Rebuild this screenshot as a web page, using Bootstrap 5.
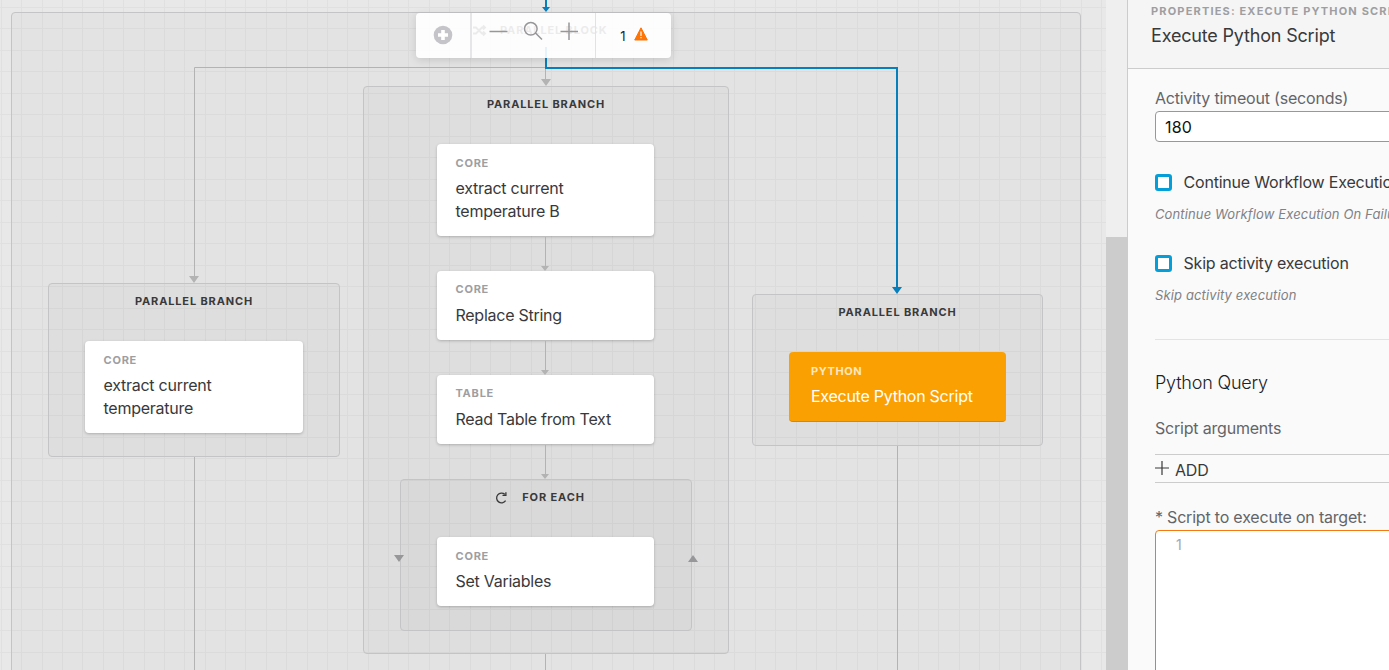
<!DOCTYPE html>
<html lang="en">
<head>
<meta charset="utf-8">
<title>Workflow editor</title>
<link href="https://cdn.jsdelivr.net/npm/bootstrap@5.3.0/dist/css/bootstrap.min.css" rel="stylesheet">
<style>
body{font-family:Inter,"Liberation Sans",sans-serif;font-size:16px;line-height:23px;color:#39393b;height:670px;background:#e8e8e8}
.canvas{width:1106px;height:670px;background:#e8e8e8}
.layer{left:0;top:0}
.zone{background:rgba(0,0,0,.018);border:1px solid #c4c4c6;border-radius:4px}
.zone-outer{left:11px;top:12px;width:1070px;height:700px}
.zone-a{left:48px;top:283px;width:292px;height:174px}
.zone-b{left:363px;top:86px;width:366px;height:568px}
.zone-c{left:752px;top:294px;width:291px;height:152px}
.zone-loop{width:292px;height:152px;background:rgba(0,0,0,.02)}
.zone-title{height:57px;padding-top:9px;line-height:16px;font-size:11px;font-weight:700;letter-spacing:.86px}
.node{width:217px;background:#fff;border-radius:4px;padding:11px 18px 13px 18.5px;box-shadow:0 1px 3px rgba(0,0,0,.22);letter-spacing:-.26px}
.zone-a .node{width:218px}
.zone-b .node{margin-right:1px}
.kind{font-size:11px;font-weight:700;line-height:16px;letter-spacing:.76px;color:#9e9ea2;margin-bottom:6px}
.kind-up{margin-top:-1px;margin-bottom:7px}
.node-active{background:#fba003;color:#fff;padding-left:22px;border-bottom:1px solid #d98500;height:70px;box-shadow:none}
.node-active .kind{color:#ffe7bd;letter-spacing:.6px}
.tools{left:416px;top:13px;width:255px;height:45px;background:rgba(255,255,255,.9);border-radius:4px;box-shadow:0 2px 8px rgba(0,0,0,.13)}
.tool-add{width:56px;border-right:2px solid #e6e6e8}
.tool-zoom{width:124px;border-right:1px solid #e2e2e4}
.block-title{left:500px;top:22px;line-height:16px;font-size:11px;font-weight:700;letter-spacing:.86px}
.track{width:22px;background:#efefef;border-right:1px solid #ccc}
.thumb{margin-top:237px;background:#ccc}
.panel{width:261px;background:#fafafa}
.panel-head{height:69px;background:#f5f5f5;border-bottom:1px solid #ccc;padding:3px 0 0 23px}
.crumb{font-size:11px;font-weight:700;line-height:16px;letter-spacing:1.17px;color:#9e9ea2}
.panel-name{font-size:18px;line-height:24px;margin-top:5px;letter-spacing:-.18px}
.fields{padding-left:27px;letter-spacing:-.2px}
.fields .lbl{color:#636569}
.box-input{height:31px;width:300px;border:1px solid #98989c;border-radius:4px;background:#fff;padding:4px 9px;color:#111;letter-spacing:.2px}
.tick{width:17px;height:17px;flex:none;border:3px solid #049fd9;border-radius:3px;background:#fff}
.tip{font-size:13px;line-height:18px;font-style:italic;color:#7f8186;letter-spacing:.13px;margin:11px 0 29px}
.add-row{height:29px;border-top:1px solid #ccc;border-bottom:1px solid #ccc}
.editor{width:300px;height:160px;border:1px solid #f47a10;border-radius:4px;background:#fff;padding:2px 0 0 20px;font-size:14px;color:#a5a7ab}
</style>
</head>
<body class="d-flex overflow-hidden">
<main class="canvas position-relative overflow-hidden flex-shrink-0">
  <svg class="layer position-absolute" width="1106" height="670">
    <defs><pattern id="mesh" x="1" y="7" width="163" height="43" patternUnits="userSpaceOnUse">
      <path d="M.5 0V43M20.500 0V43M41.500 0V43M61.500 0V43M81.500 0V43M102.500 0V43M122.500 0V43M143.500 0V43M0 .5H163M0 21.500H163" stroke="#e0e0e0"/></pattern></defs>
    <rect width="1106" height="670" fill="url(#mesh)"/>
  </svg>
  <div class="zone zone-outer position-absolute"></div>
  <section class="zone zone-a position-absolute d-flex flex-column align-items-center">
    <div class="zone-title">PARALLEL BRANCH</div>
    <div class="node"><div class="kind">CORE</div>extract current<br>temperature</div>
  </section>
  <section class="zone zone-b position-absolute d-flex flex-column align-items-center">
    <div class="zone-title">PARALLEL BRANCH</div>
    <div class="d-flex flex-column align-items-center" style="gap:35px">
      <div class="node"><div class="kind">CORE</div>extract current<br>temperature B</div>
      <div class="node"><div class="kind kind-up">CORE</div>Replace String</div>
      <div class="node"><div class="kind kind-up">TABLE</div>Read Table from Text</div>
      <div class="zone zone-loop d-flex flex-column align-items-center">
        <div class="zone-title d-flex"><svg width="13" height="14" viewBox="0 0 13 14" style="margin:2px 14px 0 -12px" fill="none" stroke="#39393b" stroke-width="1.300"><path d="M10.600 9.700A4.900 4.900 0 1 1 9.800 3.300M7.500 4.300H10.900V1.200"/></svg>FOR EACH</div>
        <div class="node"><div class="kind">CORE</div>Set Variables</div>
      </div>
    </div>
  </section>
  <section class="zone zone-c position-absolute d-flex flex-column align-items-center">
    <div class="zone-title">PARALLEL BRANCH</div>
    <div class="node node-active"><div class="kind">PYTHON</div>Execute Python Script</div>
  </section>
  <svg class="layer position-absolute" width="1106" height="670" fill="none">
    <path d="M545.500 67.500H194.500V277M545.500 68V80M545.500 237V266M545.500 341V370M545.500 445V474M194.500 457V670M545.500 654V670M897.500 446V670" stroke="#b3b3b3"/>
    <path d="M189 276H199L194 283ZM541 79H551L546 86ZM541 266H549L545 271ZM541 370H549L545 375ZM541 474H549L545 479Z" fill="#b3b3b3"/>
    <path d="M394 555H404L399 562ZM688 562H698L693 555Z" fill="#97979a"/>
    <path d="M546 0V8M546 47V68H897V288" stroke="#087fbd" stroke-width="2"/>
    <path d="M542 7H550L546 12ZM892 287H902L897 294Z" fill="#087fbd"/>
    <path d="M473 27.500H476L482 33.500H485M473 33.500H476L482 27.500H485M483 25.500L485 27.500 483 29.500M483 31.500L485 33.500 483 35.500" stroke="#39393b" stroke-width="1.800"/>
  </svg>
  <div class="block-title position-absolute">PARALLEL BLOCK</div>
  <div class="tools position-absolute d-flex">
    <div class="tool-add d-flex align-items-center justify-content-center"><svg width="20" height="20" viewBox="0 0 20 20" style="margin-top:-1px"><circle cx="10" cy="10" r="9.300" fill="#c4c4c9"/><path d="M10 5V15M5 10H15" stroke="#fff" stroke-width="3.600"/></svg></div>
    <div class="tool-zoom"><svg width="123" height="45" fill="none" stroke="#97979a" stroke-width="1.500"><path d="M17.500 18.500H35.500M88.500 18.500H106M97 9.500V27M63.500 20L70 26.500"/><circle cx="58.800" cy="15.800" r="6.300"/></svg></div>
    <div class="d-flex align-items-center justify-content-center flex-fill gap-2" style="font-size:13px;color:#222;padding-left:1px"><span style="padding-top:2px">1</span><svg width="14" height="14" viewBox="0 0 14 14" style="margin-top:-3px"><path d="M7 .8 13.300 13H.7Z" fill="#fd7407" stroke="#fd7407" stroke-linejoin="round"/><path d="M7 4.500V9M7 10V11.300" stroke="#fff" stroke-width="1.200"/></svg></div>
  </div>
</main>
<div class="track d-flex flex-column flex-shrink-0"><div class="thumb flex-fill"></div></div>
<aside class="panel flex-shrink-0 overflow-hidden text-nowrap">
  <header class="panel-head"><div class="crumb">PROPERTIES: EXECUTE PYTHON SCRIPT</div><div class="panel-name">Execute Python Script</div></header>
  <div class="fields">
    <div class="lbl" style="padding-top:18px">Activity timeout (seconds)</div>
    <div class="box-input" style="margin-top:1px">180</div>
    <div class="d-flex align-items-center" style="margin-top:29px"><span class="tick"></span><span style="margin-left:11.5px">Continue Workflow Execution On Failure</span></div>
    <div class="tip">Continue Workflow Execution On Failure</div>
    <div class="d-flex align-items-center"><span class="tick"></span><span style="margin-left:11.5px">Skip activity execution</span></div>
    <div class="tip mb-0">Skip activity execution</div>
    <div style="margin-top:35px;border-top:1px solid #e3e3e5"></div>
    <div style="margin-top:31px;font-size:18px;font-weight:300;line-height:24px;color:#222">Python Query</div>
    <div class="lbl" style="margin-top:22px">Script arguments</div>
    <div class="add-row d-flex align-items-center" style="margin-top:14px"><svg width="14" height="14" class="me-2" style="margin-top:-1px" stroke="#39393b" stroke-width="1.200"><path d="M0 7H14M7 0V14"/></svg><span style="margin-left:-2px;padding-top:3px">ADD</span></div>
    <div class="lbl" style="margin-top:23px">* Script to execute on target:</div>
    <div class="editor" style="margin-top:1px">1</div>
  </div>
</aside>
<script src="https://cdn.jsdelivr.net/npm/bootstrap@5.3.0/dist/js/bootstrap.bundle.min.js"></script>
</body>
</html>
